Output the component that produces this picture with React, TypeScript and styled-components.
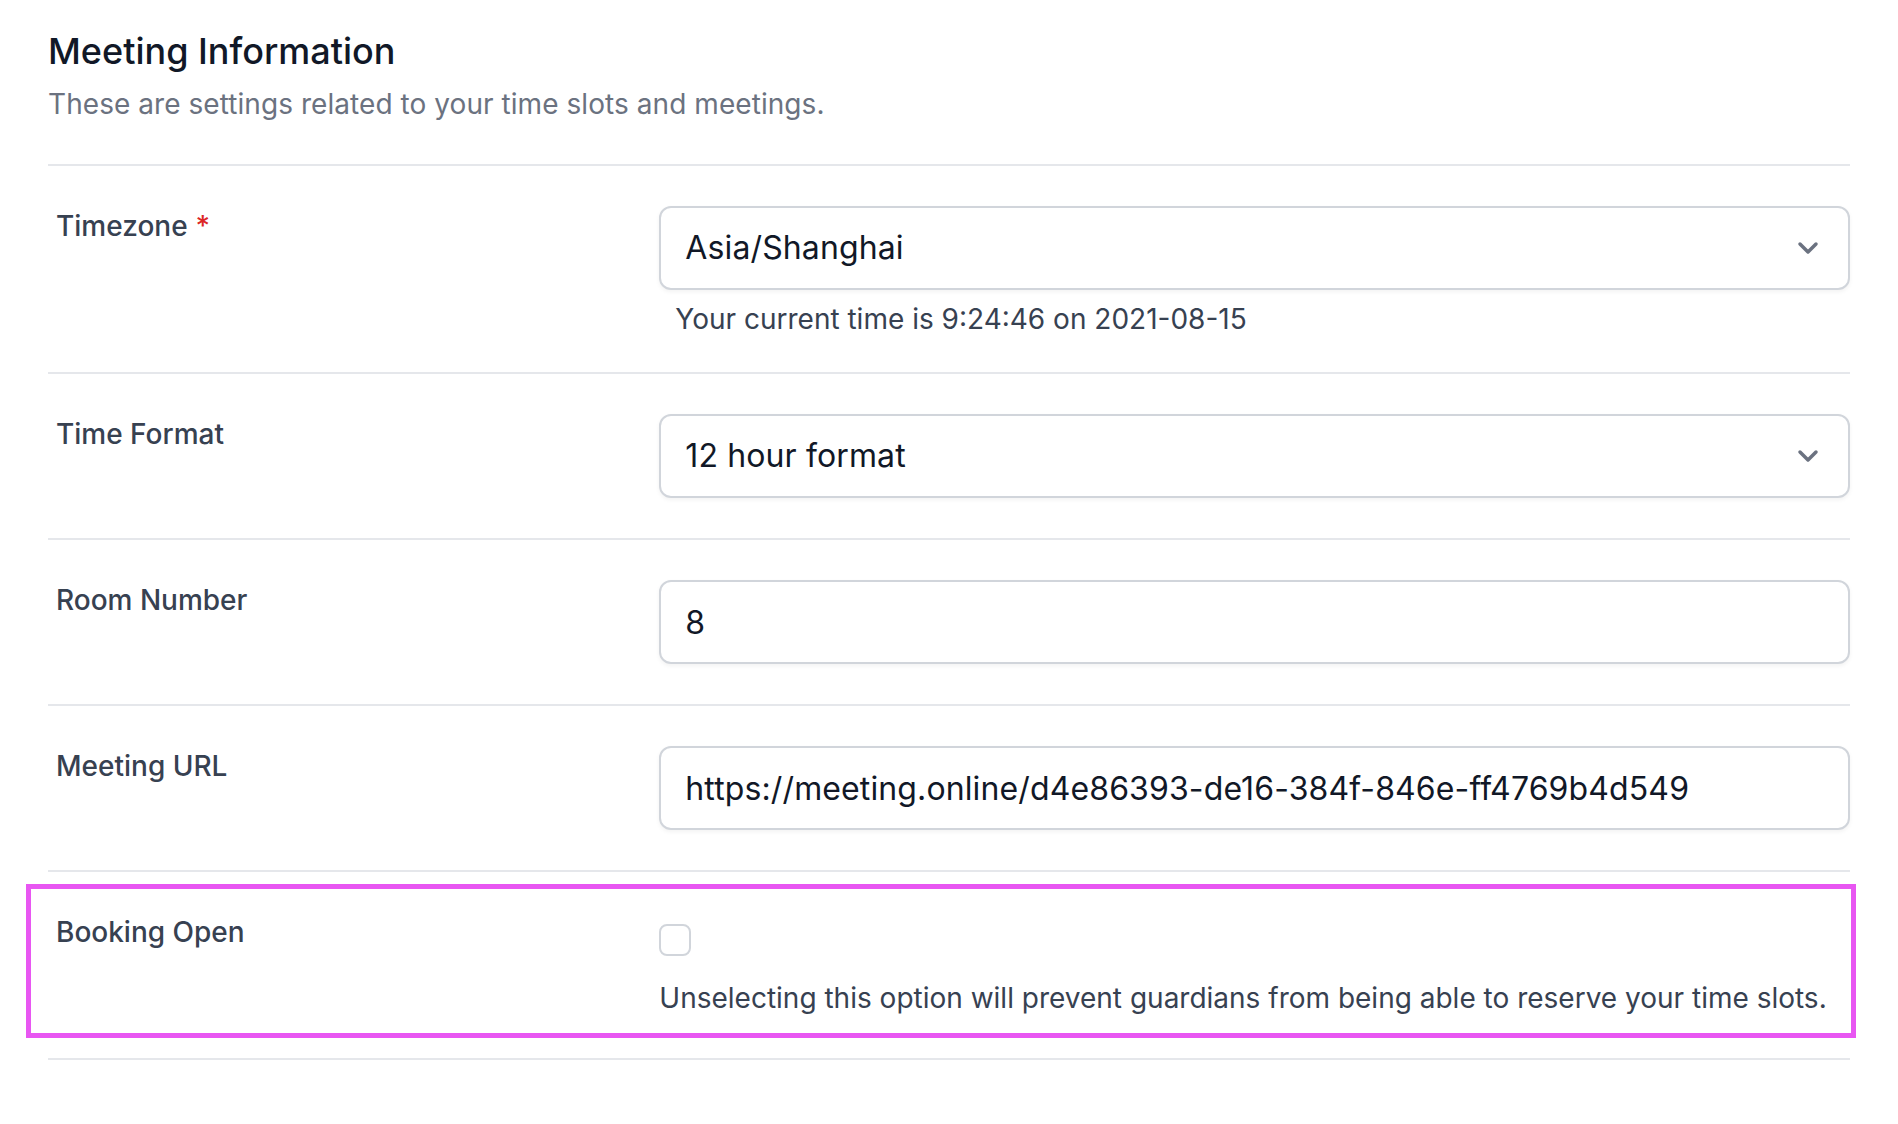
import React from "react";
import styled, { createGlobalStyle } from "styled-components";

const GlobalStyle = createGlobalStyle`
  html, body {
    margin: 0;
    padding: 0;
    background: #ffffff;
  }
  body {
    font-family: Inter, "Noto Sans", "Liberation Sans", sans-serif;
    -webkit-font-smoothing: antialiased;
  }
  * {
    box-sizing: border-box;
  }
`;

const Page = styled.main`
  padding: 27px 48px 40px;
  display: flex;
  flex-direction: column;
  gap: 40px;
`;

const Header = styled.header`
  display: flex;
  flex-direction: column;
  gap: 9px;
`;

const Title = styled.h3`
  margin: 0;
  font-size: 36px;
  line-height: 48px;
  font-weight: 500;
  color: #111827;
`;

const Description = styled.p`
  margin: 0;
  font-size: 28px;
  line-height: 40px;
  letter-spacing: 0.06px;
  color: #6b7280;
`;

const Row = styled.div`
  position: relative;
  display: grid;
  grid-template-columns: repeat(3, minmax(0, 1fr));
  column-gap: 32px;
  align-items: start;
  border-top: 2px solid #e5e7eb;
  padding-top: 40px;
`;

const Rule = styled.div`
  border-top: 2px solid #e5e7eb;
`;

const Label = styled.label`
  display: block;
  padding-left: 8px;
  font-size: 28px;
  line-height: 40px;
  font-weight: 500;
  color: #374151;
`;

const Required = styled.span`
  color: #dc2626;
  margin-left: 8px;
`;

const Control = styled.div`
  grid-column: span 2;
  display: flex;
  flex-direction: column;
  align-items: stretch;
`;

const fieldBase = `
  width: 100%;
  height: 84px;
  border: 2px solid #d1d5db;
  border-radius: 12px;
  background: #ffffff;
  box-shadow: 0 2px 4px rgba(0, 0, 0, 0.05);
  font-family: Inter, "Noto Sans", "Liberation Sans", sans-serif;
  font-size: 32px;
  letter-spacing: 0.12px;
  color: #111827;
`;

const SelectBox = styled.div`
  ${fieldBase}
  display: flex;
  align-items: center;
  justify-content: space-between;
  padding: 0 20px 0 24px;
`;

const SelectValue = styled.span`
  line-height: 48px;
`;

const Chevron = styled.svg`
  width: 40px;
  height: 40px;
  flex: none;
`;

const TextInput = styled.input`
  ${fieldBase}
  display: block;
  padding: 0 24px;
  outline: none;
`;

const TimeHint = styled.p`
  margin: 16px 0 0;
  padding-left: 16px;
  font-size: 28px;
  line-height: 26px;
  color: #374151;
`;

const Checkbox = styled.input`
  appearance: none;
  -webkit-appearance: none;
  display: block;
  margin: 12px 0 0;
  width: 32px;
  height: 32px;
  border: 2px solid #d1d5db;
  border-radius: 8px;
  background: #ffffff;
`;

const CheckboxHint = styled.p`
  margin: 22px 0 0;
  font-size: 28px;
  line-height: 40px;
  color: #374151;
`;

const Highlight = styled.div`
  position: absolute;
  top: 12px;
  left: -22px;
  right: -6px;
  bottom: -20px;
  border: 5px solid #e856f2;
  pointer-events: none;
`;

const ChevronIcon = () => (
  <Chevron viewBox="0 0 20 20" fill="none" aria-hidden="true">
    <path
      d="M6 8l4 4 4-4"
      stroke="#6b7280"
      strokeWidth="1.75"
      strokeLinecap="round"
      strokeLinejoin="round"
    />
  </Chevron>
);

const Select = ({ value }: { value: string }) => (
  <SelectBox role="combobox" aria-expanded="false">
    <SelectValue>{value}</SelectValue>
    <ChevronIcon />
  </SelectBox>
);

export default function App() {
  return (
    <>
      <GlobalStyle />
      <Page>
        <Header>
          <Title>Meeting Information</Title>
          <Description>
            These are settings related to your time slots and meetings.
          </Description>
        </Header>

        <Row>
          <Label>
            Timezone<Required>*</Required>
          </Label>
          <Control>
            <Select value="Asia/Shanghai" />
            <TimeHint>Your current time is 9:24:46 on 2021-08-15</TimeHint>
          </Control>
        </Row>

        <Row>
          <Label>Time Format</Label>
          <Control>
            <Select value="12 hour format" />
          </Control>
        </Row>

        <Row>
          <Label htmlFor="room">Room Number</Label>
          <Control>
            <TextInput id="room" type="text" defaultValue="8" />
          </Control>
        </Row>

        <Row>
          <Label htmlFor="url">Meeting URL</Label>
          <Control>
            <TextInput
              id="url"
              type="text"
              defaultValue="https://meeting.online/d4e86393-de16-384f-846e-ff4769b4d549"
            />
          </Control>
        </Row>

        <Row>
          <Label htmlFor="booking">Booking Open</Label>
          <Control>
            <Checkbox id="booking" type="checkbox" />
            <CheckboxHint>
              Unselecting this option will prevent guardians from being able to
              reserve your time slots.
            </CheckboxHint>
          </Control>
          <Highlight />
        </Row>

        <Rule />
      </Page>
    </>
  );
}
